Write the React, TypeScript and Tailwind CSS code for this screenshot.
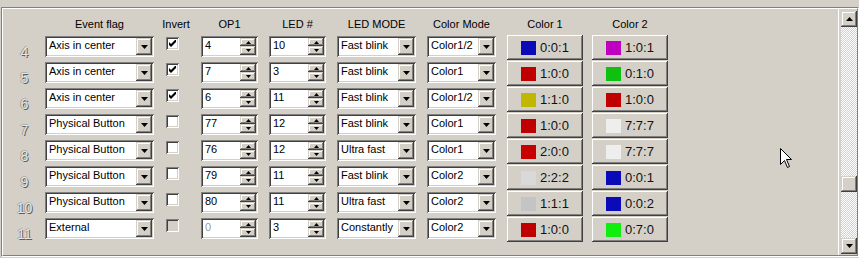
import * as React from 'react';

type Row = {
  n: number;
  flag: string;
  inv: boolean;
  op: string;
  led: string;
  mode: string;
  cm: string;
  c1: [string, string];
  c2: [string, string];
  off?: boolean;
};

const rows: Row[] = [
  { n: 4, flag: 'Axis in center', inv: true, op: '4', led: '10', mode: 'Fast blink', cm: 'Color1/2', c1: ['#0a0ab8', '0:0:1'], c2: ['#c000c0', '1:0:1'] },
  { n: 5, flag: 'Axis in center', inv: true, op: '7', led: '3', mode: 'Fast blink', cm: 'Color1', c1: ['#c00000', '1:0:0'], c2: ['#10c010', '0:1:0'] },
  { n: 6, flag: 'Axis in center', inv: true, op: '6', led: '11', mode: 'Fast blink', cm: 'Color1/2', c1: ['#c0b800', '1:1:0'], c2: ['#c00000', '1:0:0'] },
  { n: 7, flag: 'Physical Button', inv: false, op: '77', led: '12', mode: 'Fast blink', cm: 'Color1', c1: ['#c00000', '1:0:0'], c2: ['#eeeeee', '7:7:7'] },
  { n: 8, flag: 'Physical Button', inv: false, op: '76', led: '12', mode: 'Ultra fast', cm: 'Color1', c1: ['#c80000', '2:0:0'], c2: ['#eeeeee', '7:7:7'] },
  { n: 9, flag: 'Physical Button', inv: false, op: '79', led: '11', mode: 'Fast blink', cm: 'Color2', c1: ['#d9d9d9', '2:2:2'], c2: ['#0a0ab8', '0:0:1'] },
  { n: 10, flag: 'Physical Button', inv: false, op: '80', led: '11', mode: 'Ultra fast', cm: 'Color2', c1: ['#c4c4c4', '1:1:1'], c2: ['#0a0ab8', '0:0:2'] },
  { n: 11, flag: 'External', inv: false, op: '0', led: '3', mode: 'Constantly', cm: 'Color2', c1: ['#c00000', '1:0:0'], c2: ['#10ee10', '0:7:0'], off: true },
];

const sunken =
  'shadow-[inset_1px_1px_0_#808080,inset_-1px_-1px_0_#ffffff,inset_2px_2px_0_#404040,inset_-2px_-2px_0_#d4d0c8]';
const raised =
  'shadow-[inset_-1px_-1px_0_#404040,inset_1px_1px_0_#d4d0c8,inset_-2px_-2px_0_#808080,inset_2px_2px_0_#ffffff]';
const pushBtn =
  'shadow-[inset_-1px_-1px_0_#404040,inset_1px_1px_0_#ffffff,inset_-2px_-2px_0_#808080]';

function Down({ w = 7 }: { w?: number }) {
  return (
    <svg width={w} height={Math.ceil(w / 2)} viewBox={`0 0 ${w} ${Math.ceil(w / 2)}`}>
      <polygon points={`0,0 ${w},0 ${w / 2},${Math.ceil(w / 2)}`} fill="#000" />
    </svg>
  );
}

function Up({ w = 7 }: { w?: number }) {
  return (
    <svg width={w} height={Math.ceil(w / 2)} viewBox={`0 0 ${w} ${Math.ceil(w / 2)}`}>
      <polygon points={`0,${Math.ceil(w / 2)} ${w},${Math.ceil(w / 2)} ${w / 2},0`} fill="#000" />
    </svg>
  );
}

function Combo({ value, w }: { value: string; w: string }) {
  return (
    <div className={`relative mt-[1px] h-[21px] bg-white ${sunken} ${w}`}>
      <div className="pl-[4px] pt-[3px] text-[11px] leading-[13px] text-black whitespace-nowrap">{value}</div>
      <div className={`absolute right-[2px] top-[2px] flex h-[17px] w-[16px] items-center justify-center bg-[#d4d0c8] ${raised}`}>
        <Down />
      </div>
    </div>
  );
}

function Spin({ value, off }: { value: string; off?: boolean }) {
  return (
    <div className={`relative mt-[1px] h-[21px] w-[57px] bg-white ${sunken}`}>
      <div className={`pl-[4px] pt-[3px] text-[11px] leading-[13px] ${off ? 'text-[#9a9a9a]' : 'text-black'}`}>{value}</div>
      <div className="absolute right-[2px] top-[2px] flex w-[16px] flex-col">
        <div className={`flex h-[8px] items-center justify-center bg-[#d4d0c8] ${raised}`}>
          <Up w={5} />
        </div>
        <div className={`flex h-[9px] items-center justify-center bg-[#d4d0c8] ${raised}`}>
          <Down w={5} />
        </div>
      </div>
    </div>
  );
}

function Check({ on, off }: { on: boolean; off?: boolean }) {
  return (
    <div className={`ml-[6px] mt-[2px] relative h-[13px] w-[13px] ${off ? 'bg-[#d4d0c8]' : 'bg-white'} ${sunken}`}>
      {on && (
        <svg className="absolute left-[3px] top-[3px]" width="7" height="7" viewBox="0 0 7 7">
          <path d="M0 2 L2 4 L7 -1 L7 2 L2 7 L0 5 Z" fill="#000" />
        </svg>
      )}
    </div>
  );
}

function ColorBtn({ c, ml }: { c: [string, string]; ml: string }) {
  return (
    <div className={`flex h-[25px] w-[76px] items-center justify-center gap-[4px] bg-[#d4d0c8] ${pushBtn} ${ml}`}>
      <span className="h-[14px] w-[15px]" style={{ background: c[0] }} />
      <span className="text-[13px] leading-[15px] text-[#111]">{c[1]}</span>
    </div>
  );
}

export default function App() {
  const head = 'text-center text-[11px] leading-[13px] text-black';
  return (
    <div className="relative h-[258px] w-[859px] overflow-hidden bg-[#d4d0c8] pl-[1px] pt-[7px] [font-family:'Liberation_Sans',Arial,sans-serif]">
      <div className="h-[250px] w-[858px] border border-b-white border-l-[#808080] border-r-white border-t-[#808080]">
        <div className="flex h-full border border-b-[#808080] border-l-white border-r-[#808080] border-t-white">
          <div className="flex flex-1 flex-col border-r border-white pt-[9px]">
            <div className="flex h-[13px]">
              <div className="w-[42px]" />
              <div className={`w-[109px] ${head}`}>Event flag</div>
              <div className={`ml-[6px] w-[32px] ${head}`}>Invert</div>
              <div className={`ml-[9px] w-[57px] ${head}`}>OP1</div>
              <div className={`ml-[11px] w-[57px] ${head}`}>LED #</div>
              <div className={`ml-[11px] w-[79px] ${head}`}>LED MODE</div>
              <div className={`ml-[11px] w-[69px] ${head}`}>Color Mode</div>
              <div className={`ml-[11px] w-[76px] ${head}`}>Color 1</div>
              <div className={`ml-[9px] w-[76px] ${head}`}>Color 2</div>
            </div>
            <div className="mt-[4px] flex flex-col">
              {rows.map((r) => (
                <div key={r.n} className="flex h-[26px] items-start">
                  <div className="mt-[9px] w-[42px] pl-[1px] text-center text-[14px] leading-[16px] text-[#e6e6e6] [text-shadow:1px_1px_0_#5c5c5c,-1px_0_0_#9a9a9a,0_-1px_0_#b0b0b0]">
                    {r.n}
                  </div>
                  <Combo value={r.flag} w="w-[109px]" />
                  <div className="ml-[6px] w-[32px]">
                    <Check on={r.inv} off={r.off} />
                  </div>
                  <div className="ml-[9px]">
                    <Spin value={r.op} off={r.off} />
                  </div>
                  <div className="ml-[11px]">
                    <Spin value={r.led} />
                  </div>
                  <div className="ml-[11px]">
                    <Combo value={r.mode} w="w-[79px]" />
                  </div>
                  <div className="ml-[11px]">
                    <Combo value={r.cm} w="w-[69px]" />
                  </div>
                  <ColorBtn c={r.c1} ml="ml-[11px]" />
                  <ColorBtn c={r.c2} ml="ml-[9px]" />
                </div>
              ))}
            </div>
          </div>
          <div className="mb-[1px] ml-[2px] mt-[2px] flex w-[16px] flex-col bg-[repeating-conic-gradient(#d4d0c8_0_25%,#ffffff_0_50%)] bg-[length:2px_2px]">
            <div className={`flex h-[16px] items-center justify-center bg-[#d4d0c8] ${raised}`}>
              <Up />
            </div>
            <div className="flex-1">
              <div className={`mt-[149px] h-[16px] bg-[#d4d0c8] ${raised}`} />
            </div>
            <div className={`flex h-[16px] items-center justify-center bg-[#d4d0c8] ${raised}`}>
              <Down />
            </div>
          </div>
        </div>
      </div>
      <svg className="absolute left-[780px] top-[148px]" width="13" height="22" viewBox="0 0 13 22">
        <path d="M0.5 0.5 L0.5 16.5 L4.5 12.5 L7.5 19.5 L9.5 18.5 L6.5 11.5 L11.5 11.5 Z" fill="#fff" stroke="#000" strokeWidth="1" />
      </svg>
    </div>
  );
}
